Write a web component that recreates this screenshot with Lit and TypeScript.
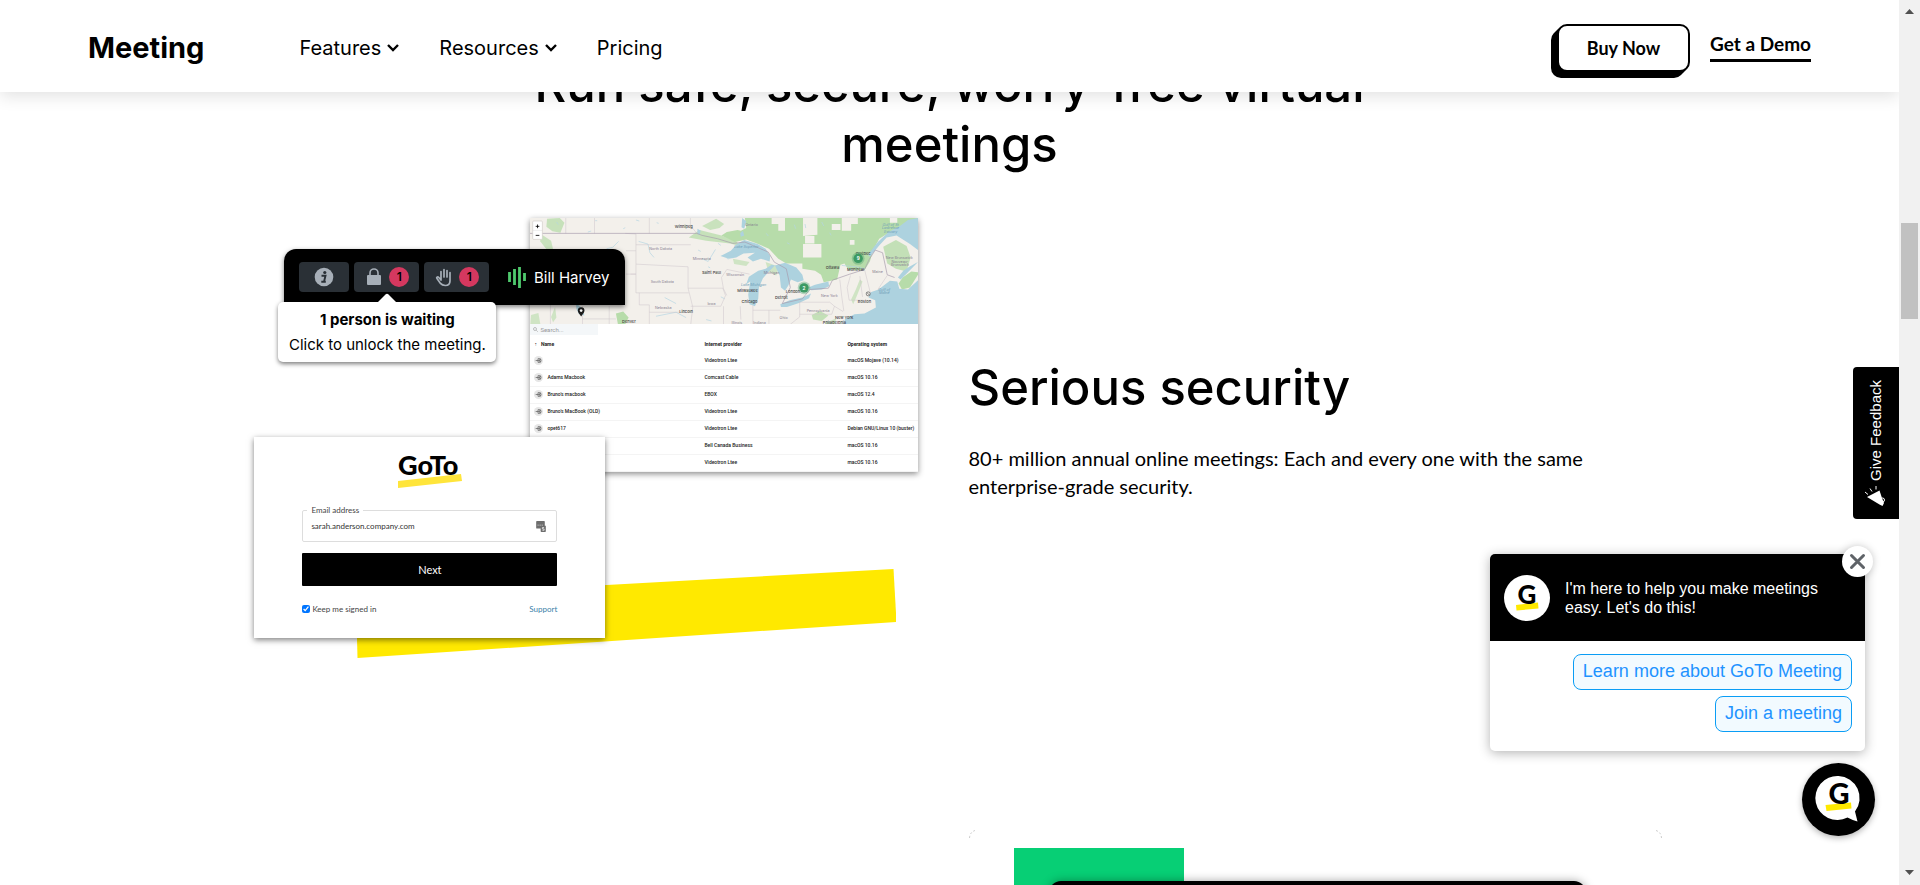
import { LitElement, html, svg, css } from "lit";
import { customElement } from "lit/decorators.js";

@customElement("us-map")
class UsMap extends LitElement {
  static styles = css`
    :host { display: block; }
    .map { display: block; width: 100%; }
    .label { font: 400 11px Inter, sans-serif; fill: #857c8e; text-anchor: middle; }
    .city { font: 500 12px Inter, sans-serif; fill: #444; text-anchor: middle; }
    .sea { font: italic 400 11px Inter, sans-serif; fill: #6d9db8; text-anchor: middle; }
    .count { font: 700 14px Inter, sans-serif; fill: #fff; text-anchor: middle; }
  `;

  private labels: [string, number, number, string][] = [
    ["North Dakota", 424, 151, "label"], ["South Dakota", 429, 249, "label"],
    ["Minnesota", 547, 181, "label"], ["Wisconsin", 647, 229, "label"],
    ["Nebraska", 432, 326, "label"], ["Iowa", 576, 314, "label"],
    ["Michigan", 756, 223, "label"], ["Ohio", 792, 357, "label"],
    ["Illinois", 652, 371, "label"], ["Indiana", 720, 371, "label"],
    ["New York", 929, 291, "label"], ["Pennsylvania", 895, 336, "label"],
    ["Maine", 1073, 218, "label"], ["Ontario", 696, 77, "label"],
    ["New Brunswick", 1138, 177, "label"], ["Nouveau-", 1140, 188, "label"],
    ["Brunswick", 1140, 199, "label"],
    ["Winnipeg", 493, 84, "city"], ["Saint Paul", 576, 221, "city"],
    ["Milwaukee", 684, 276, "city"], ["Chicago", 690, 309, "city"],
    ["Detroit", 785, 295, "city"], ["London", 820, 277, "city"],
    ["Ottawa", 938, 206, "city"], ["Montréal", 1007, 212, "city"],
    ["Boston", 1034, 309, "city"], ["New York", 973, 355, "city"],
    ["Philadelphia", 944, 371, "city"], ["Lincoln", 500, 338, "city"],
    ["Denver", 329, 367, "city"], ["Québec", 1030, 164, "city"],
    ["Lake Superior", 680, 143, "sea"], ["Lake Michigan", 702, 257, "sea"],
    ["Gulf of", 1093, 271, "sea"], ["Maine", 1093, 282, "sea"],
    ["Gulf of St", 1112, 77, "sea"], ["Lawrence", 1112, 88, "sea"], ["Estuary", 1112, 99, "sea"],
  ];

  render() {
    return html`<svg class="map" viewBox="33 54 1161 318" role="img" aria-label="Map of sessions">
      <rect x="33" y="54" width="1161" height="318" fill="#f3f0eb" />
      <g fill="#b7dcaa">
        <path d="M676 54H850V190L800 190L776 176L748 146L712 130L680 118L646 126L606 106L622 96L654 90L664 92L680 84Z" />
        <path d="M893 54H1194V72L1130 84L1078 116L1060 150L1050 184L1034 210L985 208L974 190L962 194L952 238L912 246L904 224L886 212L848 206V172H905V132H850V108L893 104Z" />
        <path d="M1090 140L1128 120L1160 138L1172 172L1160 214L1128 206L1102 190Z" opacity=".8" />
        <path d="M84 56L122 54L136 68L124 98L100 94L82 80Z" opacity=".75" />
        <path d="M508 112L540 90L606 106L652 126L660 138L632 130L560 122Z" opacity=".75" />
        <path d="M590 56L614 72L600 84L572 90L548 78Z" opacity=".7" />
        <path d="M290 340L312 334L328 352L318 372H296Z" />
        <path d="M62 100L96 122L104 156L84 150L64 124Z" opacity=".7" />
        <path d="M876 344L900 332L926 346L906 362L880 358Z" opacity=".8" />
        <path d="M640 176L690 186L680 198L644 192ZM738 186L778 200L770 226L746 214Z" opacity=".6" />
        <path d="M1136 250L1148 232L1174 214L1194 216V224L1170 262L1146 268Z" />
        <path d="M994 298L1008 268L1020 238L1028 244L1010 290L1000 312Z" opacity=".6" />
        <path d="M916 368L950 354L944 372H914ZM36 344L58 338L64 372H34ZM96 350L108 320L112 352L102 366Z" opacity=".6" />
      </g>
      <g fill="#f3f0eb">
        <path d="M756 54H796V92H776V72H756ZM936 72H962V90H936ZM966 54H1014V72H994V92H966ZM856 108H884V130H856ZM1110 54H1132V68H1110Z" />
        <path d="M880 138H898V160H880ZM990 120H1004V134H990Z" />
      </g>
      <g fill="#add2df">
        <path d="M603 168L634 152L652 132L674 120L714 132L738 146L752 168L750 184L724 176L700 184L684 172L706 158L672 160L650 172L628 176Z" />
        <path d="M716 212L738 206L756 194L766 196L748 214L730 234L718 262L716 296L706 318L690 312L686 284L692 244L680 252L688 230Z" />
        <path d="M766 196L796 188L830 202L848 224L852 240L834 246L814 238L806 256L796 272L784 262L780 226Z" />
        <path d="M782 312L810 300L848 292L874 280L868 294L838 308L802 320L784 320Z" />
        <path d="M866 262L886 254L926 244L928 258L906 268L874 270Z" />
        <path d="M1194 240L1164 268L1138 266L1132 244L1110 242L1076 268L1052 276L1046 292L1066 300L1068 322L1034 340L1004 342L976 356L970 372H1194Z" />
        <path d="M1194 54V150L1170 132L1130 106L1100 112L1078 136L1050 170L1044 164L1074 126L1106 96L1140 78L1164 60Z" />
        <path d="M1194 186L1164 216L1142 238L1134 232L1150 212L1168 200Z" />
        <path d="M668 54L680 64L674 86L666 82ZM662 100L670 92L674 106L664 110ZM534 86L544 92L540 104L534 102Z" />
        <path d="M170 308L186 322L196 346L180 342L172 326Z" />
      </g>
      <g fill="none" stroke="#b4d5e2" stroke-width="2">
        <path d="M358 124L386 132L392 158L404 172M298 124L280 142L262 146M436 292L470 310M84 168L102 182M548 176L566 184L588 148M410 348L470 336L500 352M1034 206L1010 200L966 196" />
        <path d="M112 66l6 8M206 96l10-3M228 62h6M312 86l6-3M350 60l10 3M412 68l6 2M596 130l8 6M536 150l8 4M620 172l6 6M566 200l6 3M906 66l6 12M930 98l4 8M824 74l4 12M740 100l6 8M802 128l8 4M856 72l2 12M604 290l12 6M560 358l16 4" />
      </g>
      <g fill="none" stroke="#cdc5ca" stroke-width="1.500">
        <path d="M140 54V100M226 54V100M390 54V100M513 54V76L532 100M318 100L350 102V222M350 152H320M350 134H514M350 192L506 200M334 222H350V278H508M350 222H320M360 278V314H390V372M390 336H506M506 200V264L520 320L514 372M506 264H610L618 286L604 318H514M622 208L606 232L612 266L622 286M622 208L690 222M612 318V372M662 318L664 358M700 316V372M748 330V372M700 330H782M840 304V350L812 372M840 306H930L944 318L936 342H840M944 318L970 334M960 238L966 290L972 332M992 226L982 262L988 300H1030M1020 228L1028 290M1052 280L1034 208M1102 226L1074 268M33 276H94M94 276V372M190 318V372M270 318V372M190 356H290" />
      </g>
      <path fill="none" stroke="#a79aad" stroke-width="2" d="M33 100H532L548 106L594 116L640 130L676 126L746 156L764 186L800 206L812 262L788 310L848 296L870 268L926 264L938 240L990 222L1034 208L1048 178L1066 150L1088 158L1102 224L1124 232" />
      ${this.labels.map(([t, x, y, c]) => svg`<text class=${c} x=${x} y=${y}>${t}</text>`)}
      <g fill="#3c9a63"><circle cx="1015" cy="175" r="19" opacity=".35" /><circle cx="1015" cy="175" r="14" />
        <circle cx="853" cy="263" r="19" opacity=".35" /><circle cx="853" cy="263" r="14" /></g>
      <text class="count" x="1015" y="180">9</text>
      <text class="count" x="853" y="268">2</text>
      <g fill="none" stroke="#555" stroke-width="2"><circle cx="1045" cy="281" r="6" /><path d="M1041 277l8 8" /></g>
      <path fill="#1c1c1c" d="M186 349C180 340 176 337 176 331a10 10 0 0 1 20 0c0 6-4 9-10 18Z" />
      <circle cx="186" cy="331" r="4" fill="#fff" />
      <rect x="41" y="63" width="29" height="55" rx="3" fill="#fff" stroke="#d0ccc8" stroke-width="2" />
      <path d="M42 91H69" stroke="#ccc" />
      <path d="M50 79h11M55.500 73.500v11M50 106h11" stroke="#000" stroke-width="2.500" />
    </svg>`;
  }
}

@customElement("g-mark")
class GMark extends LitElement {
  static styles = css`
    :host { display: block; }
    .mark { display: block; width: 100%; }
    .g { font: 900 26px Lato, sans-serif; text-anchor: middle; }
  `;
  render() {
    return html`<svg class="mark" viewBox="0 0 46 46" aria-hidden="true">
      <path d="M12 30L34 27.500L34.500 33.500L12.500 35.500Z" fill="#ffe900" />
      <text class="g" x="23" y="29">G</text>
    </svg>`;
  }
}

@customElement("app-root")
class AppRoot extends LitElement {
  static styles = css`
    :host { display: flex; height: 100vh; overflow: hidden; background: #fff; color: #000; font-family: Inter, sans-serif; }
    * { box-sizing: border-box; }
    a { color: inherit; text-decoration: none; }
    button { font-family: inherit; cursor: pointer; }
    .page { position: relative; flex: 1; min-width: 0; overflow: hidden; }

    .header { position: absolute; z-index: 5; top: 0; left: 0; right: 0; height: 92px; padding: 4px 88px 0; background: #fff; display: flex; align-items: center; box-shadow: 0 4px 16px rgba(0, 0, 0, 0.12); }
    .brand { font-size: 29px; line-height: 36px; font-weight: 700; margin-right: 95px; }
    .nav { display: flex; gap: 40px; flex: 1; }
    .nav-item { display: flex; align-items: center; gap: 6px; padding: 0; border: 0; background: none; color: #000; font-size: 20px; line-height: 28px; }
    .chevron { width: 12px; height: 8px; }
    .cta { display: flex; align-items: center; gap: 20px; }
    .buy { width: 133px; height: 48px; border: 2px solid #000; border-radius: 10px; background: #fff; color: #000; font-size: 18px; font-weight: 700; font-family: Lato, sans-serif; box-shadow: -2px 2px 0 #000, -4px 4px 0 #000, -6px 6px 0 #000; }
    .demo { font-family: Lato, sans-serif; font-size: 19px; font-weight: 700; line-height: 28px; padding-bottom: 1px; margin-bottom: 4px; border-bottom: 3px solid #000; }

    .main { padding-top: 55px; display: flex; flex-direction: column; align-items: center; }
    .title { margin: 0 0 43px; max-width: 940px; text-align: center; font-size: 49px; line-height: 60px; font-weight: 500; }
    .feature { width: 75%; display: grid; grid-template-columns: 1fr 1fr; gap: 38px; align-items: center; }
    .copy { padding-bottom: 18px; }
    .subtitle { margin: 0 0 26px; font-size: 49px; line-height: 60px; font-weight: 500; }
    .lead { margin: 0; font-family: Lato, sans-serif; font-size: 20px; line-height: 28px; }
    .feature-next { margin-top: 172px; }

    .art { position: relative; height: 440px; margin: 0; }
    .stripe { position: absolute; left: 119px; top: 350px; width: 540px; height: 92px; }
    .sessions { position: absolute; left: 293px; top: 0; width: 388px; background: #fff; box-shadow: 0 2px 6px rgba(0, 0, 0, 0.45); }
    .search { display: flex; align-items: center; gap: 2px; width: 68px; height: 11px; padding-left: 3px; background: #f4f7f9; }
    .search-icon { width: 5px; height: 5px; flex: none; }
    .search-input { width: 50px; border: 0; padding: 0; background: none; font: 6px Roboto, sans-serif; color: #777; }
    .search-input::placeholder { color: #999; }
    .table { width: 100%; border-collapse: collapse; table-layout: fixed; font-family: Roboto, sans-serif; font-size: 5px; line-height: 7px; color: #222; }
    .table th { height: 17px; padding: 2px 0 0; text-align: left; font-weight: 700; }
    .table td { height: 17px; padding: 0; border-bottom: 1px solid #f4f4f4; font-weight: 500; }
    .col-name { width: 174px; }
    .col-isp { width: 143px; }
    .name { display: flex; align-items: center; gap: 4px; padding-left: 4px; }
    .host-icon { width: 9px; height: 9px; }
    .sort { padding: 0 4px; }

    .toolbar { position: absolute; left: 47px; top: 31px; width: 341px; height: 56px; padding: 0 16px 0 15px; border-radius: 12px 12px 0 0; background: #000; display: flex; align-items: center; gap: 5px; box-shadow: 0 2px 5px rgba(0, 0, 0, 0.5); }
    .tool { display: flex; align-items: center; justify-content: center; gap: 5px; width: 65px; height: 30px; border: 0; border-radius: 4px; padding: 0; background: #2a3036; }
    .tool-info { width: 50px; }
    .tool-icon { width: 20px; height: 20px; }
    .badge { width: 20px; height: 20px; border-radius: 50%; background: #d5385f; color: #000; font-size: 12px; line-height: 20px; font-weight: 600; }
    .speaker { display: flex; align-items: center; gap: 8px; margin-left: auto; color: #fff; font-size: 15px; }
    .wave { width: 18px; height: 22px; }
    .tip { position: absolute; left: 41px; top: 84px; width: 218px; height: 60px; padding-top: 5px; border-radius: 5px; background: #fff; text-align: center; font-size: 15px; line-height: 25px; box-shadow: 0 2px 4px rgba(0, 0, 0, 0.5); }
    .tip-title { display: block; font-weight: 700; }
    .tip-arrow { position: absolute; left: 99px; top: -9px; width: 20px; height: 10px; }

    .login { position: absolute; left: 17px; top: 219px; width: 351px; height: 201px; padding: 18px 48px 0; background: #fff; box-shadow: 0 2px 6px rgba(0, 0, 0, 0.5); font-family: Lato, sans-serif; font-size: 8px; color: #444; }
    .logo { display: block; width: 66px; height: 36px; margin: 0 auto 14px; }
    .logo-text { font: 900 27px Lato, sans-serif; }
    .field { display: flex; align-items: center; margin: 0; padding: 0 10px 4px 8px; height: 37px; border: 1px solid #ddd; border-radius: 2px; }
    .legend { padding: 0 4px; margin-left: -4px; line-height: 10px; }
    .email { flex: 1; min-width: 0; border: 0; padding: 0; font: 8px Lato, sans-serif; color: #333; }
    .key-icon { width: 10px; height: 11px; }
    .next { display: block; width: 100%; height: 33px; margin-top: 11px; border: 0; border-radius: 1px; background: #000; color: #fff; font-size: 11px; }
    .options { display: flex; justify-content: space-between; align-items: center; margin-top: 18px; line-height: 10px; }
    .keep { display: flex; align-items: center; gap: 2px; }
    .check { width: 8px; height: 8px; margin: 0; }
    .support { color: #3a7fa8; }

    .next-art { grid-column: 2; position: relative; height: 300px; border-radius: 10px; }
    .green { position: absolute; left: 45px; top: 18px; width: 170px; height: 200px; background: #07cf75; }
    .dark { position: absolute; left: 80px; top: 51px; width: 537px; height: 200px; border-radius: 12px; background: #000; box-shadow: 0 0 10px rgba(0, 0, 0, 0.35); }
    .corners { position: absolute; left: 0; top: 0; width: 100%; height: 10px; display: flex; justify-content: space-between; }
    .corner { width: 8px; height: 8px; }

    .feedback { position: absolute; z-index: 6; right: 0; top: 367px; width: 46px; height: 152px; border: 0; border-radius: 4px 0 0 4px; padding: 13px 2px 12px 0; background: #000; color: #fff; display: flex; flex-direction: column; align-items: center; justify-content: space-between; }
    .feedback-text { writing-mode: vertical-rl; transform: rotate(180deg); font: 15px "Liberation Sans", Arial, sans-serif; }
    .horn { width: 22px; height: 22px; }

    .chat { position: absolute; z-index: 6; right: 34px; top: 554px; width: 375px; border-radius: 5px; background: #fff; font-family: "Liberation Sans", Arial, sans-serif; box-shadow: 0 2px 12px rgba(0, 0, 0, 0.3); }
    .chat-head { display: flex; align-items: center; gap: 15px; height: 87px; padding: 0 14px; border-radius: 5px 5px 0 0; background: #000; color: #fff; font-size: 16px; line-height: 19px; }
    .avatar { flex: none; width: 46px; height: 46px; border-radius: 50%; background: #fff; color: #000; }
    .avatar-mark { width: 46px; }
    .chat-copy { margin: 0; max-width: 270px; }
    .chat-body { display: flex; flex-direction: column; align-items: flex-end; gap: 6px; padding: 13px 13px 19px; }
    .chip { height: 36px; padding: 0 9px 2px; border: 1px solid #0a9df5; border-radius: 8px; background: #f2faff; color: #1f93ff; font-size: 18px; }
    .close { position: absolute; right: -8px; top: -8px; width: 31px; height: 31px; padding: 0; border: 0; border-radius: 50%; background: #fff; box-shadow: 0 0 8px rgba(0, 0, 0, 0.2); }
    .close-icon { display: block; width: 31px; height: 31px; }
    .launcher { position: absolute; z-index: 6; right: 24px; top: 763px; width: 73px; height: 73px; padding: 0; border: 0; border-radius: 50%; background: #000; box-shadow: 0 2px 6px rgba(0, 0, 0, 0.3); }
    .launcher-icon { display: block; width: 73px; height: 73px; }
    .launcher-g { font: 900 29px Lato, sans-serif; text-anchor: middle; }

    .scrollbar { width: 21px; flex: none; background: #f1f1f1; display: flex; flex-direction: column; align-items: center; padding: 9px 0 10px; }
    .arrow { width: 9px; height: 5px; }
    .track { flex: 1; display: flex; flex-direction: column; }
    .thumb { width: 17px; height: 96px; margin-top: 209px; background: #c1c1c1; }
  `;

  private rows = [
    ["", "Videotron Ltee", "macOS Mojave (10.14)"],
    ["Adams Macbook", "Comcast Cable", "macOS 10.16"],
    ["Bruno's macbook", "EBOX", "macOS 12.4"],
    ["Bruno's MacBook (OLD)", "Videotron Ltee", "macOS 10.16"],
    ["opet617", "Videotron Ltee", "Debian GNU/Linux 10 (buster)"],
    ["", "Bell Canada Business", "macOS 10.16"],
    ["", "Videotron Ltee", "macOS 10.16"],
  ];

  private chevron = html`<svg class="chevron" viewBox="0 0 12 8" aria-hidden="true"><path d="M1 1L6 6L11 1" fill="none" stroke="#000" stroke-width="2.400" /></svg>`;

  private header() {
    return html`<header class="header">
      <a class="brand" href="#">Meeting</a>
      <nav class="nav">
        <button class="nav-item">Features ${this.chevron}</button>
        <button class="nav-item">Resources ${this.chevron}</button>
        <a class="nav-item" href="#">Pricing</a>
      </nav>
      <div class="cta"><button class="buy">Buy Now</button><a class="demo" href="#">Get a Demo</a></div>
    </header>`;
  }

  private sessions() {
    return html`<section class="sessions">
      <us-map></us-map>
      <label class="search">
        <svg class="search-icon" viewBox="0 0 10 10"><circle cx="4" cy="4" r="3" fill="none" stroke="#888" /><path d="M6.500 6.500L9.500 9.500" stroke="#888" /></svg>
        <input class="search-input" placeholder="Search..." aria-label="Search" />
      </label>
      <table class="table">
        <thead><tr><th class="col-name"><span class="sort">↑</span>Name</th><th class="col-isp">Internet provider</th><th>Operating system</th></tr></thead>
        <tbody>${this.rows.map(([n, p, o]) => html`<tr>
          <td><div class="name"><svg class="host-icon" viewBox="0 0 27 27"><circle cx="13.500" cy="13.500" r="13.500" fill="#e6e6e6" /><path d="M5 13.500h8M12 8v11M12 8h8M12 19h8M13 13.500h4M17 10.500v6h4v-6z" fill="none" stroke="#555" stroke-width="2" /></svg>${n}</div></td>
          <td>${p}</td><td>${o}</td></tr>`)}</tbody>
      </table>
    </section>`;
  }

  private toolbar() {
    return html`<div class="toolbar">
      <button class="tool tool-info" aria-label="Info"><svg class="tool-icon" viewBox="0 0 20 20"><circle cx="10" cy="10" r="9.300" fill="#a7afb8" /><circle cx="10.800" cy="5.500" r="1.600" fill="#2a3036" /><path d="M7.500 8.700h4l-1.500 6h1.800M7.300 14.700h3" fill="none" stroke="#2a3036" stroke-width="1.900" /></svg></button>
      <button class="tool" aria-label="Lock"><svg class="tool-icon" viewBox="0 0 20 20"><rect x="3" y="8" width="14" height="10" rx="1" fill="#a7afb8" /><path d="M6 9V6a4 4 0 0 1 8 0v3" fill="none" stroke="#a7afb8" stroke-width="1.600" /></svg><span class="badge">1</span></button>
      <button class="tool" aria-label="Raised hands"><svg class="tool-icon" viewBox="0 0 20 20"><path d="M7 13L4.800 10.500C3.600 9.300 2 10.300 3 11.600L6.500 16.400C8 18.300 9 18.500 11.300 18.500C14.500 18.500 16 16.500 16 14V5.500M7 13V4.500M10 10V2.500M13 10V3.500M16 11V6" fill="none" stroke="#a7afb8" stroke-width="1.700" stroke-linecap="round" /></svg><span class="badge">1</span></button>
      <div class="speaker"><svg class="wave" viewBox="0 0 18 22"><path d="M1.500 6V16M6.500 3V19M11.500 1V22M16.500 7V15" stroke="#4fc96d" stroke-width="2.800" /></svg>Bill Harvey</div>
    </div>
    <div class="tip"><svg class="tip-arrow" viewBox="0 0 20 10"><path d="M0 10L8.500 1.500Q10 0 11.500 1.500L20 10Z" fill="#fff" /></svg><strong class="tip-title">1 person is waiting</strong>Click to unlock the meeting.</div>`;
  }

  private login() {
    return html`<form class="login">
      <svg class="logo" viewBox="0 0 66 36" role="img" aria-label="GoTo"><path d="M1 26L64 19L65 26L1 33Z" fill="#ffe53b" /><text class="logo-text" x="1" y="20">GoTo</text></svg>
      <fieldset class="field"><legend class="legend"><label for="email">Email address</label></legend>
        <input class="email" id="email" value="sarah.anderson.company.com" />
        <svg class="key-icon" viewBox="0 0 28 32"><path d="M2 0H23a2 2 0 0 1 2 2V14H28V30a2 2 0 0 1-2 2H15a2 2 0 0 1-2-2V22H2a2 2 0 0 1-2-2V2A2 2 0 0 1 2 0Z" fill="#6d6d6d" /><path d="M4 12h3M10 12h3M16 12h3M23 19h-5v4h5v4h-5" fill="none" stroke="#fff" stroke-width="2" /></svg>
      </fieldset>
      <button class="next" type="button">Next</button>
      <div class="options"><label class="keep"><input class="check" type="checkbox" checked />Keep me signed in</label><a class="support" href="#">Support</a></div>
    </form>`;
  }

  private chat() {
    return html`<aside class="chat">
      <div class="chat-head"><div class="avatar"><g-mark class="avatar-mark"></g-mark></div><p class="chat-copy">I'm here to help you make meetings easy. Let's do this!</p></div>
      <div class="chat-body"><button class="chip">Learn more about GoTo Meeting</button><button class="chip">Join a meeting</button></div>
      <button class="close" aria-label="Close"><svg class="close-icon" viewBox="0 0 31 31"><path d="M9.500 9.500L21.500 21.500M21.500 9.500L9.500 21.500" stroke="#5f6368" stroke-width="3" stroke-linecap="round" /></svg></button>
    </aside>
    <button class="launcher" aria-label="Open chat"><svg class="launcher-icon" viewBox="0 0 73 73">
      <path d="M36.500 13a22 22 0 1 0 9 41.500Q50 57 55.500 58.500L53 48.500A22 22 0 0 0 36.500 13Z" fill="#fff" />
      <path d="M23.500 42L49 39.500L49.500 45.500L24.500 48Z" fill="#ffe900" /><text class="launcher-g" x="37" y="41">G</text></svg></button>`;
  }

  render() {
    return html`<div class="page">
        ${this.header()}
        <main class="main">
          <h2 class="title">Run safe, secure, worry-free virtual meetings</h2>
          <section class="feature">
            <figure class="art">
              <svg class="stripe" viewBox="0 0 540 92"><path d="M0 31L537.500 1L540.500 54L1.500 90Z" fill="#ffe900" /></svg>
              ${this.sessions()} ${this.toolbar()} ${this.login()}
            </figure>
            <div class="copy"><h3 class="subtitle">Serious security</h3>
              <p class="lead">80+ million annual online meetings: Each and every one with the same enterprise-grade security.</p></div>
          </section>
          <section class="feature feature-next">
            <div class="next-art">
              <div class="corners">
                <svg class="corner" viewBox="0 0 8 8"><path d="M.500 8Q1 2 6 .500" fill="none" stroke="#ccc" stroke-dasharray="2 2" /></svg>
                <svg class="corner" viewBox="0 0 8 8"><path d="M2 .500Q7 2 7.500 8" fill="none" stroke="#ccc" stroke-dasharray="2 2" /></svg>
              </div>
              <div class="green"></div><div class="dark"></div>
            </div>
          </section>
        </main>
        <button class="feedback"><span class="feedback-text">Give Feedback</span>
          <svg class="horn" viewBox="0 0 22 22" aria-hidden="true"><path d="M3 12L15.500 5.500L18 13L20 18L18.500 21L15.500 19.500Z" fill="#fff" /><path d="M1 7l3 2.500M6 3.500l2 3M12 1v3.500" stroke="#fff" /><circle cx="18.500" cy="15" r="2" fill="none" stroke="#fff" /></svg></button>
        ${this.chat()}
      </div>
      <div class="scrollbar" aria-hidden="true">
        <svg class="arrow" viewBox="0 0 9 5"><path d="M0 5L4.500 0L9 5Z" fill="#505050" /></svg>
        <div class="track"><div class="thumb"></div></div>
        <svg class="arrow" viewBox="0 0 9 5"><path d="M0 0L4.500 5L9 0Z" fill="#505050" /></svg>
      </div>`;
  }
}
